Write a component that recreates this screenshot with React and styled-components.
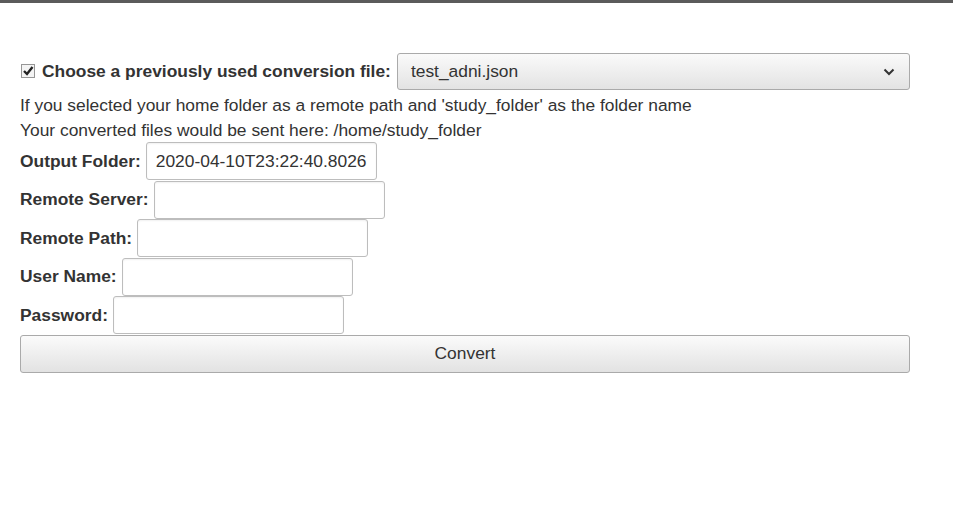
import React from 'react';
import styled, { createGlobalStyle } from 'styled-components';

//Global page reset
const GlobalStyle = createGlobalStyle`
  html, body {
    margin: 0;
    padding: 0;
    background: #fff;
  }
  body {
    font-family: "Liberation Sans", Arial, sans-serif;
    color: #333;
  }
`;

//Dark strip at the very top
const TopBar = styled.div`
  height: 3px;
  background: #5b5b5b;
`;

//Form wrapper
const Form = styled.form`
  width: 890px;
  padding: 50px 0 0 20px;
  font-size: 17.4px;
`;

//First row - checkbox, label and select
const ChooseRow = styled.div`
  display: flex;
  align-items: center;
  height: 37px;
`;

const CheckBox = styled.span`
  display: inline-flex;
  width: 14px;
  height: 14px;
  margin: 0 7px 2px 1px;
`;

const BoldLabel = styled.label`
  font-weight: bold;
  white-space: nowrap;
  margin-right: ${(p) => p.gap || 5}px;
`;

const SelectBox = styled.div`
  flex: 1;
  height: 37px;
  box-sizing: border-box;
  display: flex;
  align-items: center;
  justify-content: space-between;
  padding: 0 14px 0 13px;
  border: 1px solid #aaa;
  border-radius: 3px;
  background: linear-gradient(#fafafa, #e3e3e3);
  color: #333;
`;

//Info lines
const InfoBlock = styled.div`
  margin-top: 3px;
`;

const Info = styled.p`
  margin: 0;
  line-height: 24.5px;
`;

//Label + input rows
const FieldRow = styled.div`
  display: flex;
  align-items: center;
  height: 38.5px;
`;

const TextInput = styled.input`
  width: 231px;
  height: 38px;
  box-sizing: border-box;
  padding: 0 9px;
  border: 1px solid #bdbdbd;
  border-radius: 3px;
  box-shadow: inset 0 1px 2px rgba(0, 0, 0, 0.06);
  font-family: "Liberation Sans", Arial, sans-serif;
  font-size: 17.4px;
  color: #333;
  background: #fff;
  outline: none;
`;

const ConvertButton = styled.button`
  display: block;
  width: 890px;
  height: 38px;
  border: 1px solid #aaa;
  border-radius: 3px;
  background: linear-gradient(#fbfbfb, #e2e2e2);
  font-family: "Liberation Sans", Arial, sans-serif;
  font-size: 17.4px;
  color: #333;
`;

function CheckIcon() {
  return (
    <svg width="14" height="14" viewBox="0 0 14 14">
      <rect x="0.5" y="0.5" width="13" height="13" fill="#f4f4f4" stroke="#333" strokeDasharray="1 1" />
      <path d="M3 7 L6 10 L11.5 3" fill="none" stroke="#222" strokeWidth="2.4" />
    </svg>
  );
}

function Chevron() {
  return (
    <svg width="12" height="8" viewBox="0 0 12 8">
      <path d="M1.5 1.5 L6 6 L10.5 1.5" fill="none" stroke="#333" strokeWidth="2" />
    </svg>
  );
}

const fields = [
  { label: 'Output Folder:', value: '2020-04-10T23:22:40.802655' },
  { label: 'Remote Server:', value: '' },
  { label: 'Remote Path:', value: '' },
  { label: 'User Name:', value: '' },
  { label: 'Password:', value: '', type: 'password' },
];

export default function App() {
  return (
    <>
      <GlobalStyle />
      <TopBar />
      <Form onSubmit={(e) => e.preventDefault()}>
        <ChooseRow>
          <CheckBox>
            <CheckIcon />
          </CheckBox>
          <BoldLabel gap={6}>Choose a previously used conversion file:</BoldLabel>
          <SelectBox>
            <span>test_adni.json</span>
            <Chevron />
          </SelectBox>
        </ChooseRow>
        <InfoBlock>
          <Info>If you selected your home folder as a remote path and 'study_folder' as the folder name</Info>
          <Info>Your converted files would be sent here: /home/study_folder</Info>
        </InfoBlock>
        {fields.map((f) => (
          <FieldRow key={f.label}>
            <BoldLabel>{f.label}</BoldLabel>
            <TextInput type={f.type || 'text'} defaultValue={f.value} />
          </FieldRow>
        ))}
        <ConvertButton type="submit">Convert</ConvertButton>
      </Form>
    </>
  );
}
